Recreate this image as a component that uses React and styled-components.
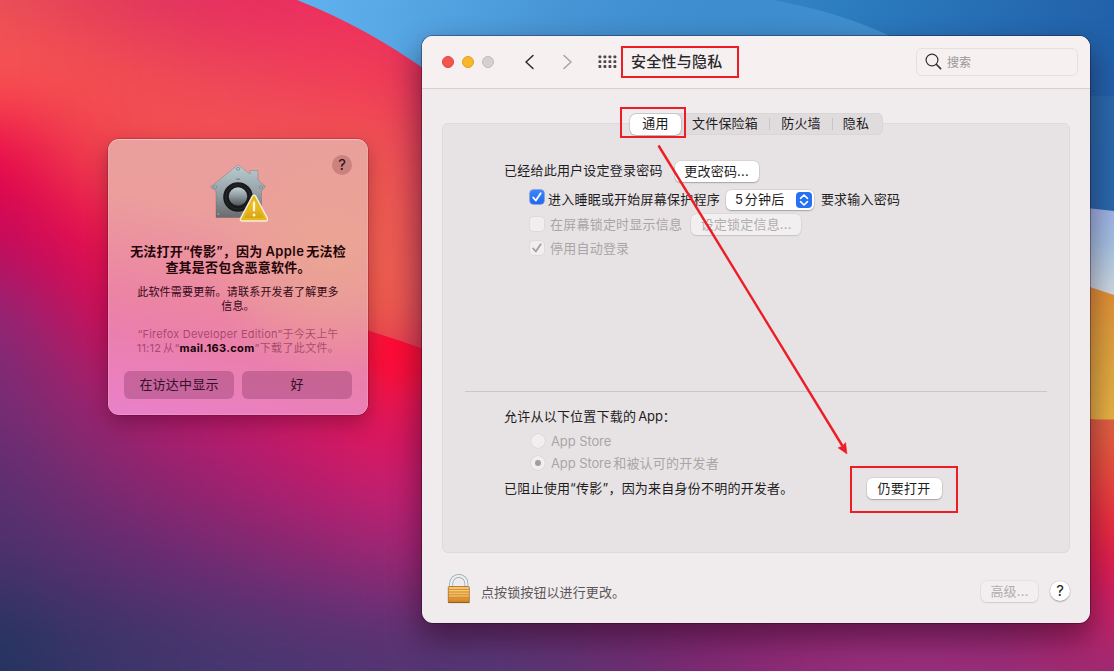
import React from "react";
import styled, { createGlobalStyle, css } from "styled-components";

const GlobalStyle = createGlobalStyle`
  * { box-sizing: border-box; }
  body {
    margin: 0;
    font-family: Inter, "Noto Sans CJK SC", sans-serif;
    font-size: 13px;
    color: #1c1a1c;
    -webkit-font-smoothing: antialiased;
  }
`;

const Desktop = styled.main`
  position: relative;
  width: 1114px;
  height: 671px;
  overflow: hidden;
`;

const WallpaperSvg = styled.svg`
  position: absolute;
  inset: 0;
  display: block;
`;

/* ---------- wallpaper ---------- */

const COLS = [0, 80, 160, 240, 320, 400];
const FIELD = [
  [0, ["#e84e58", "#e23f59", "#e1335f", "#e52d60", "#ec2d60", "#ee2e5c"]],
  [80, ["#fb5850", "#f6534f", "#f14c55", "#ef4758", "#f04058", "#f23c54"]],
  [160, ["#e80048", "#ee3a4c", "#f25250", "#f25555", "#f05653", "#f05850"]],
  [240, ["#c40a5c", "#e4044e", "#f02a4c", "#f05550", "#f05c50", "#f0624e"]],
  [320, ["#882a7a", "#bc165f", "#e00050", "#f01048", "#f04a48", "#f0684c"]],
  [400, ["#732c74", "#942670", "#b01c6c", "#c41868", "#da1660", "#f00c48"]],
  [480, ["#5d2f70", "#762b70", "#902470", "#a62070", "#be1c6c", "#cc2070"]],
  [560, ["#48326c", "#582f6e", "#662c72", "#762b72", "#882874", "#982876"]],
  [640, ["#233460", "#363468", "#40356c", "#473670", "#4e3572", "#543472"]],
];
const FLOOR = [
  [480, "#503874"], [560, "#5c3474"], [640, "#6c2e72"], [720, "#802a74"],
  [800, "#902c78"], [880, "#96307c"], [960, "#982e7c"], [1040, "#942e78"], [1120, "#8c2c74"],
];
const EAST = [
  [400, "#e07040"], [480, "#ea4a3c"], [560, "#f0143c"], [610, "#c8226a"],
];

function Wallpaper() {
  return (
    <WallpaperSvg width="1114" height="671" viewBox="0 0 1114 671">
      <defs>
        <filter id="soft" filterUnits="userSpaceOnUse" x="-200" y="-200" width="1520" height="1080" colorInterpolationFilters="sRGB">
          <feGaussianBlur stdDeviation="38" />
        </filter>
        <linearGradient id="sky" gradientUnits="userSpaceOnUse" x1="300" y1="0" x2="1114" y2="160">
          <stop offset="0" stopColor="#60b2ee" />
          <stop offset="0.3" stopColor="#4896d6" />
          <stop offset="0.65" stopColor="#2c7cc0" />
          <stop offset="1" stopColor="#205ea8" />
        </linearGradient>
        <linearGradient id="wave" gradientUnits="userSpaceOnUse" x1="560" y1="0" x2="890" y2="20">
          <stop offset="0" stopColor="#4a98d8" stopOpacity="0" />
          <stop offset="1" stopColor="#4290d0" />
        </linearGradient>
        <linearGradient id="haze" x1="0" y1="0" x2="0" y2="1">
          <stop offset="0" stopColor="#9db0e6" />
          <stop offset="0.4" stopColor="#a4c0e2" />
          <stop offset="1" stopColor="#d4dde2" />
        </linearGradient>
        <linearGradient id="amber" x1="0" y1="0" x2="0" y2="1">
          <stop offset="0" stopColor="#e28a34" />
          <stop offset="0.5" stopColor="#dea23c" />
          <stop offset="1" stopColor="#e8b244" />
        </linearGradient>
        <radialGradient id="ember" gradientUnits="userSpaceOnUse" cx="400" cy="345" r="80">
          <stop offset="0" stopColor="#ff0a34" />
          <stop offset="0.4" stopColor="#fa0838" stopOpacity="0.8" />
          <stop offset="1" stopColor="#e80c50" stopOpacity="0" />
        </radialGradient>
      </defs>
      <rect width="1114" height="671" fill="#b01c6c" />
      <g filter="url(#soft)">
        {FIELD.map(([y, colors]) =>
          colors.map((c, i) => (
            <rect
              key={`${y}-${i}`}
              x={i === 0 ? -160 : COLS[i] - 40}
              y={y === 0 ? -160 : y - 40}
              width={i === 0 ? 201 : 81}
              height={y === 0 ? 201 : y === 640 ? 241 : 81}
              fill={c}
            />
          ))
        )}
        {FLOOR.map(([x, c]) => (
          <rect key={x} x={x - 40} y="600" width={x === 1120 ? 201 : 81} height="241" fill={c} />
        ))}
        {EAST.map(([y, c]) => (
          <rect key={y} x="1040" y={y - 40} width="281" height="81" fill={c} />
        ))}
      </g>
      <path d="M300 312 Q368 328 440 355 L440 440 L300 440 Z" fill="url(#ember)" />
      <path d="M297 0 Q366 27 430 73 L460 211 L1114 211 L1114 0 Z" fill="url(#sky)" />
      <path d="M540 0 L773 0 Q840 12 892 37 L540 37 Z" fill="url(#wave)" />
      <path d="M1050 94 Q1090 97 1114 96 V213 H1050 Z" fill="#3a7cb4" opacity="0.35" />
      <path d="M1050 204 L1114 211 V300 H1050 Z" fill="url(#haze)" />
      <path d="M1050 276 L1090 287 L1114 295 V419.500 Q1095 420 1084 418 L1050 412 Z" fill="url(#amber)" />
    </WallpaperSvg>
  );
}

/* ---------- alert ---------- */

const Alert = styled.section`
  position: absolute;
  left: 108px;
  top: 139px;
  width: 260px;
  height: 276px;
  padding: 16px;
  border-radius: 11px;
  display: flex;
  flex-direction: column;
  align-items: center;
  background:
    radial-gradient(circle at 85% 42%, rgba(234, 166, 146, 0.9), rgba(234, 160, 148, 0) 45%),
    linear-gradient(192deg, #e9a09c 0%, #eb9e9c 32%, #ec84a4 62%, #ea7fae 75%, #ea80ca 100%);
  box-shadow:
    0 0 0 0.5px rgba(80, 0, 30, 0.4),
    inset 0 1px 0 rgba(255, 220, 220, 0.5),
    inset 0 0 0 0.5px rgba(255, 200, 210, 0.5),
    0 8px 20px rgba(50, 0, 30, 0.35);
`;

const AlertTop = styled.header`
  display: grid;
  grid-template-columns: 20px 1fr 20px;
  justify-items: center;
  align-items: start;
  width: 100%;
  height: 88px;
`;

const AlertHelp = styled.button`
  grid-column: 3;
  width: 20px;
  height: 20px;
  padding: 0;
  border: 0;
  border-radius: 50%;
  background: rgba(110, 40, 50, 0.25);
  color: #2b0c12;
  font: 400 15px/20px Inter, sans-serif;
`;

const GateIcon = styled.svg`
  grid-column: 2;
  margin-top: 8px;
`;

const AlertTitle = styled.h1`
  margin: 0;
  font-size: 13px;
  line-height: 16px;
  font-weight: 600;
  color: #240509;
  text-align: center;
  white-space: nowrap;
`;

const AlertText = styled.p`
  margin: ${(p) => p.$top}px 0 0;
  font-size: 11px;
  line-height: 14px;
  text-align: center;
  white-space: nowrap;
  color: ${(p) => (p.$dim ? "rgba(120, 30, 70, 0.6)" : "#330a18")};
  b { color: #16040a; font-weight: 700; }
`;

const Line = styled.span`
  display: block;
  letter-spacing: ${(p) => p.$track ?? 0.2}px;
`;

/* Latin runs set inside Chinese text, with a narrow gap on the joining sides */
const Latin = styled.span`
  letter-spacing: ${(p) => p.$track ?? -0.1}px;
  margin-left: ${(p) => p.$before || 0}px;
  margin-right: ${(p) => p.$after || 0}px;
`;

const AlertActions = styled.footer`
  display: grid;
  grid-template-columns: 1fr 1fr;
  gap: 8px;
  width: 228px;
  margin-top: auto;
`;

const AlertButton = styled.button`
  height: 28px;
  padding: 0 0 3px;
  border: 0;
  border-radius: 6px;
  background: rgba(125, 45, 90, 0.32);
  color: #34102a;
  font: 400 13px Inter, "Noto Sans CJK SC", sans-serif;
  letter-spacing: 0.2px;
`;

function Gatekeeper() {
  return (
    <GateIcon width="60" height="60" viewBox="0 0 60 60">
      <defs>
        <linearGradient id="steel" x1="0" y1="0" x2="0" y2="1">
          <stop offset="0" stopColor="#b9cbd1" />
          <stop offset="0.5" stopColor="#97a4a9" />
          <stop offset="1" stopColor="#686b6d" />
        </linearGradient>
        <linearGradient id="knob" x1="0" y1="0" x2="0" y2="1">
          <stop offset="0" stopColor="#c3d0d5" />
          <stop offset="0.5" stopColor="#8a979c" />
          <stop offset="1" stopColor="#505659" />
        </linearGradient>
        <linearGradient id="sign" x1="0" y1="0" x2="0" y2="1">
          <stop offset="0" stopColor="#f8d436" />
          <stop offset="1" stopColor="#d8a010" />
        </linearGradient>
      </defs>
      <path
        d="M29 2.500 Q30 2 31 2.500 L42 11 V7.500 H50 V17 L57.500 23.500 L53.500 28 V54.500 H8 V28 L2.500 24 Z"
        fill="url(#steel)"
        stroke="rgba(70,70,75,.4)"
        strokeWidth="0.6"
      />
      <g fill="#d3dde0" stroke="#6b757a" strokeWidth="0.8">
        <ellipse cx="30" cy="5.800" rx="1.800" ry="1.200" />
        <ellipse cx="7" cy="24" rx="1.700" ry="1.100" />
        <ellipse cx="53" cy="24" rx="1.700" ry="1.100" />
        <circle cx="10.200" cy="51" r="1" />
      </g>
      <rect x="28.200" y="15.500" width="3.800" height="1.400" fill="#7c898e" />
      <circle cx="30" cy="34" r="14.800" fill="#17191a" />
      <circle cx="30" cy="34" r="12.200" fill="none" stroke="#272b2d" strokeWidth="1" />
      <circle cx="30" cy="33.500" r="9.200" fill="url(#knob)" />
      <path
        d="M46 34 L57.800 56.200 H34.200 Z"
        fill="#f7efd8"
        stroke="#f7efd8"
        strokeWidth="5"
        strokeLinejoin="round"
      />
      <path d="M46 34 L57.800 56.200 H34.200 Z" fill="url(#sign)" stroke="#e6b820" strokeWidth="2.200" strokeLinejoin="round" />
      <path d="M46 39.500 V47.500" stroke="#fff6dc" strokeWidth="2.200" strokeLinecap="round" />
      <circle cx="46" cy="52" r="1.500" fill="#fff6dc" />
    </GateIcon>
  );
}

/* ---------- preferences window ---------- */

const Window = styled.section`
  position: absolute;
  z-index: 0;
  left: 422px;
  top: 36px;
  width: 668px;
  height: 587px;
  display: flex;
  flex-direction: column;
  border-radius: 11px;
  overflow: hidden;
  background: #f0ebed;
`;

const WindowShadow = styled.div`
  position: absolute;
  left: 422px;
  top: 36px;
  width: 668px;
  height: 587px;
  border-radius: 11px;
  box-shadow: 0 0 0 1px rgba(30, 0, 30, 0.35), 0 14px 30px 2px rgba(25, 0, 20, 0.46);
`;

const Toolbar = styled.header`
  display: flex;
  align-items: center;
  flex: none;
  height: 53px;
  padding: 0 12px 1px 20px;
  background: #f6f0f1;
  border-bottom: 1px solid #d6d0d2;
`;

const Lights = styled.div`
  display: flex;
  gap: 8px;
  width: 82px;
`;

const Light = styled.span`
  width: 12px;
  height: 12px;
  border-radius: 50%;
  background: ${(p) => p.$color};
  border: 0.5px solid ${(p) => p.$edge};
`;

const Nav = styled.svg`
  flex: none;
  margin-right: ${(p) => p.$gap}px;
`;

const Title = styled.h2`
  flex: 1;
  margin: 0;
  font-size: 15px;
  line-height: 22px;
  font-weight: 500;
  letter-spacing: 0.25px;
  color: #2b282a;
`;

const Search = styled.label`
  display: flex;
  align-items: center;
  width: 162px;
  height: 28px;
  padding-left: 8px;
  gap: 5px;
  border: 1px solid #e5dfe1;
  border-radius: 6px;
  color: #9a9597;
  font-size: 12px;
`;

const Body = styled.div`
  display: flex;
  flex-direction: column;
  align-items: center;
  flex: 1;
  padding: 24px 20px 0;
`;

const Tabs = styled.nav`
  display: flex;
  align-items: center;
  z-index: 1;
  height: 22px;
  margin-left: 1px;
  border-radius: 6px;
  background: #e0dcde;
  box-shadow: inset 0 0 0 1px #dad6d8;
`;

const Tab = styled.span`
  width: ${(p) => p.$w}px;
  height: ${(p) => (p.$on ? 21 : 12)}px;
  padding-right: ${(p) => p.$tail || 0}px;
  line-height: ${(p) => (p.$on ? 19 : 11)}px;
  text-align: center;
  letter-spacing: 0.2px;
  color: #1d1b1c;
  ${(p) => p.$rule && css`border-right: 1px solid #c9c5c7;`}
  ${(p) =>
    p.$on &&
    css`
      background: #fff;
      border-radius: 6px;
      box-shadow: 0 0 0 0.5px rgba(0, 0, 0, 0.12), 0 1px 2px rgba(0, 0, 0, 0.2);
    `}
`;

const Panel = styled.div`
  display: flex;
  flex-direction: column;
  width: 628px;
  height: 430px;
  margin-top: -12px;
  padding: 36px 22px 0;
  border: 1px solid #dedadc;
  border-radius: 6px;
  background: #e7e3e5;
`;

const Row = styled.div`
  display: flex;
  align-items: center;
  height: 22px;
  margin-top: ${(p) => p.$top || 0}px;
  padding-left: ${(p) => p.$indent}px;
  white-space: nowrap;
`;

const Label = styled.span`
  letter-spacing: 0.22px;
  margin-left: ${(p) => p.$left || 0}px;
  margin-bottom: ${(p) => p.$lift ?? 4}px;
  color: ${(p) => (p.$dim ? "#a9a5a7" : "#1f1d1e")};
`;

const Rule = styled.hr`
  width: 100%;
  height: 1px;
  margin: 132px 0 0;
  border: 0;
  background: #cbc7c9;
`;

const PushButton = styled.button`
  width: ${(p) => p.$w}px;
  height: 21px;
  margin-left: ${(p) => p.$left || 0}px;
  padding: 0 0 2px;
  border: 0;
  border-radius: 5.5px;
  background: ${(p) => (p.$dim ? "#f2eff0" : "#fff")};
  box-shadow: 0 0 0 0.5px rgba(0, 0, 0, ${(p) => (p.$dim ? 0.08 : 0.12)}),
    0 1px 1.5px rgba(0, 0, 0, ${(p) => (p.$dim ? 0.1 : 0.24)});
  color: ${(p) => (p.$dim ? "#b1adaf" : "#1f1d1e")};
  font: 400 13px Inter, "Noto Sans CJK SC", sans-serif;
  letter-spacing: 0.2px;
`;

const Select = styled.div`
  display: flex;
  align-items: center;
  justify-content: space-between;
  width: 88px;
  height: 20px;
  margin-left: 6px;
  padding: 0 2px 0 9px;
  border-radius: 5.5px;
  background: #fff;
  box-shadow: 0 0 0 0.5px rgba(0, 0, 0, 0.12), 0 1px 1.5px rgba(0, 0, 0, 0.24);
`;

const Box = styled.span`
  display: grid;
  place-items: center;
  width: 14px;
  height: 14px;
  margin-bottom: ${(p) => p.$lift || 0}px;
  border-radius: 3.5px;
  background: ${(p) => (p.$on ? "linear-gradient(#3b86fb, #1f67ee)" : "#f1eeef")};
  box-shadow: 0 0 0 0.5px ${(p) => (p.$on ? "#2a6be0" : "#d6d2d4")};
`;

const Radio = styled.span`
  display: grid;
  place-items: center;
  width: 14px;
  height: 14px;
  border-radius: 50%;
  background: #f1eeef;
  box-shadow: 0 0 0 0.5px #d2ced0;
  &::after {
    content: "";
    width: 6px;
    height: 6px;
    border-radius: 50%;
    background: ${(p) => (p.$on ? "#a19d9f" : "transparent")};
  }
`;

const Footer = styled.footer`
  display: flex;
  align-items: center;
  width: 628px;
  height: 30px;
  margin-top: 23px;
  padding-left: 5px;
`;

const FooterText = styled.span`
  flex: 1;
  margin-left: 10px;
  color: #5b5759;
  letter-spacing: 0.1px;
`;

const LockSvg = styled.svg`
  margin-bottom: 5px;
`;

const RoundHelp = styled.button`
  width: 20px;
  height: 20px;
  margin-left: 12px;
  padding: 0;
  border: 0;
  border-radius: 50%;
  background: #fff;
  box-shadow: 0 0 0 0.5px rgba(0, 0, 0, 0.12), 0 1px 1.5px rgba(0, 0, 0, 0.25);
  color: #1b191a;
  font: 400 15px/20px Inter, sans-serif;
`;

const Check = ({ color }) => (
  <svg width="12" height="12" viewBox="0 0 12 12">
    <path d="M2.200 6.500 L4.800 9.500 L9.700 2.300" fill="none" stroke={color} strokeWidth="1.9" strokeLinecap="round" strokeLinejoin="round" />
  </svg>
);

const Stepper = () => (
  <svg width="16" height="16" viewBox="0 0 16 16">
    <rect width="16" height="16" rx="4" fill="#2670f4" />
    <path d="M4.500 6.300 L8 3 L11.500 6.300 M4.500 9.700 L8 13 L11.500 9.700" fill="none" stroke="#fff" strokeWidth="1.6" strokeLinecap="round" strokeLinejoin="round" />
  </svg>
);

function Padlock() {
  return (
    <LockSvg width="24" height="30" viewBox="0 0 24 30">
      <defs>
        <linearGradient id="brass" x1="0" y1="0" x2="0" y2="1">
          <stop offset="0" stopColor="#f4bd5e" />
          <stop offset="0.6" stopColor="#eaa440" />
          <stop offset="1" stopColor="#c87f22" />
        </linearGradient>
      </defs>
      <path d="M4.200 13 V9.500 A7.600 7.600 0 0 1 19.400 9.500 V13" fill="none" stroke="#93a2aa" strokeWidth="3.800" />
      <path d="M4.200 13 V9.500 A7.600 7.600 0 0 1 19.400 9.500 V13" fill="none" stroke="#e9f0f3" strokeWidth="2.400" />
      <rect x="1.300" y="12.500" width="21" height="16" rx="0.8" fill="url(#brass)" stroke="#a86a1c" strokeWidth="0.8" />
      <path d="M2 15.500H22M2 18.200H22M2 20.900H22M2 23.600H22" stroke="#c98932" strokeWidth="0.8" />
      <path d="M2 14H22M2 16.500H22M2 19.200H22M2 21.900H22" stroke="#fbd68a" strokeWidth="0.7" />
      <path d="M1 28.600H22.600" stroke="#8a4f16" strokeWidth="0.8" />
    </LockSvg>
  );
}

/* ---------- annotations ---------- */

const Mark = styled.div`
  position: absolute;
  left: ${(p) => p.$x}px;
  top: ${(p) => p.$y}px;
  width: ${(p) => p.$w}px;
  height: ${(p) => p.$h}px;
  border: 2px solid #ee1c25;
`;

const Arrow = styled.svg`
  position: absolute;
  left: 650px;
  top: 140px;
`;

export default function App() {
  return (
    <Desktop>
      <GlobalStyle />
      <Wallpaper />

      <WindowShadow />
      <Alert>
        <AlertTop>
          <Gatekeeper />
          <AlertHelp>?</AlertHelp>
        </AlertTop>
        <AlertTitle>
          <Line>无法打开“传影”，因为<Latin $before={3} $after={2} $track={0.4}>Apple</Latin>无法检</Line>
          <Line>查其是否包含恶意软件。</Line>
        </AlertTitle>
        <AlertText $top={10}>
          <Line>此软件需要更新。请联系开发者了解更多</Line>
          <Line>信息。</Line>
        </AlertText>
        <AlertText $top={14} $dim>
          <Line>“Firefox Developer Edition”于今天上午</Line>
          <Line $track={0.35}><Latin $after={2} $track={0.2}>11:12</Latin>从“<b>mail.163.com</b>”下载了此文件。</Line>
        </AlertText>
        <AlertActions>
          <AlertButton>在访达中显示</AlertButton>
          <AlertButton>好</AlertButton>
        </AlertActions>
      </Alert>

      <Window>
        <Toolbar>
          <Lights>
            <Light $color="#f4544e" $edge="#dc4640" />
            <Light $color="#f8b62c" $edge="#dea024" />
            <Light $color="#d5d0d2" $edge="#c2bdbf" />
          </Lights>
          <Nav $gap={25} width="12" height="16" viewBox="0 0 12 16">
            <path d="M9 1.500 L2 8 L9 14.500" fill="none" stroke="#2c292b" strokeWidth="1.5" strokeLinecap="round" strokeLinejoin="round" />
          </Nav>
          <Nav $gap={25} width="12" height="16" viewBox="0 0 12 16">
            <path d="M3 1.500 L10 8 L3 14.500" fill="none" stroke="#a8a3a5" strokeWidth="1.5" strokeLinecap="round" strokeLinejoin="round" />
          </Nav>
          <Nav $gap={14} width="19" height="14" viewBox="0 0 19 14" fill="#4c494b">
            {[0.5, 5.3, 10.100].map((y) =>
              [0, 5, 10, 15].map((x) => <rect key={`${x}-${y}`} x={x + 0.5} y={y} width="2.800" height="2.800" rx="0.7" />)
            )}
          </Nav>
          <Title>安全性与隐私</Title>
          <Search>
            <svg width="17" height="17" viewBox="0 0 17 17" fill="none" stroke="#353234" strokeLinecap="round">
              <circle cx="7" cy="7" r="5.900" strokeWidth="1.200" />
              <path d="M11.500 11.500 L15.600 15.600" strokeWidth="1.700" />
            </svg>
            搜索
          </Search>
        </Toolbar>

        <Body>
          <Tabs>
            <Tab $on $w={51}>通用</Tab>
            <Tab $w={89} $rule>文件保险箱</Tab>
            <Tab $w={63} $rule>防火墙</Tab>
            <Tab $w={50} $tail={4}>隐私</Tab>
          </Tabs>
          <Panel>
            <Row $indent={39}>
              <Label>已经给此用户设定登录密码</Label>
              <PushButton $w={84} $left={12}>更改密码...</PushButton>
            </Row>
            <Row $indent={65} $top={7}>
              <Box $on $lift={6}><Check color="#fff" /></Box>
              <Label $left={4}>进入睡眠或开始屏幕保护程序</Label>
              <Select>
                <Label $lift={3}><Latin $after={2}>5</Latin>分钟后</Label>
                <Stepper />
              </Select>
              <Label $left={7}>要求输入密码</Label>
            </Row>
            <Row $indent={65} $top={2}>
              <Box />
              <Label $dim $left={6} $lift={2}>在屏幕锁定时显示信息</Label>
              <PushButton $dim $w={110} $left={9}>设定锁定信息...</PushButton>
            </Row>
            <Row $indent={65} $top={2}>
              <Box><Check color="#a5a1a3" /></Box>
              <Label $dim $left={6} $lift={2}>停用自动登录</Label>
            </Row>
            <Rule />
            <Row $indent={39} $top={14}>
              <Label>允许从以下位置下载的<Latin $before={2}>App</Latin>：</Label>
            </Row>
            <Row $indent={66} $top={2}>
              <Radio />
              <Label $dim $left={6} $lift={0}><Latin>App Store</Latin></Label>
            </Row>
            <Row $indent={66}>
              <Radio $on />
              <Label $dim $left={6} $lift={2}><Latin $after={2}>App Store</Latin>和被认可的开发者</Label>
            </Row>
            <Row $indent={39} $top={3}>
              <Label $lift={2}>已阻止使用“传影”，因为来自身份不明的开发者。</Label>
              <PushButton $w={75} $left={73}>仍要打开</PushButton>
            </Row>
          </Panel>
          <Footer>
            <Padlock />
            <FooterText>点按锁按钮以进行更改。</FooterText>
            <PushButton $dim $w={57}>高级...</PushButton>
            <RoundHelp>?</RoundHelp>
          </Footer>
        </Body>
      </Window>

      <Mark $x={621} $y={46} $w={118} $h={32} />
      <Mark $x={620} $y={107} $w={66} $h={31} />
      <Mark $x={850} $y={466} $w={108} $h={47} />
      <Arrow width="210" height="330" viewBox="0 0 210 330">
        <path d="M8.500 5.500 L192.500 306" stroke="#ee1c25" strokeWidth="2.400" />
        <path d="M197 314 L188 307.800 L192 306.500 L195.600 302.500 Z" fill="#ee1c25" stroke="#ee1c25" strokeWidth="0.5" />
      </Arrow>
    </Desktop>
  );
}
